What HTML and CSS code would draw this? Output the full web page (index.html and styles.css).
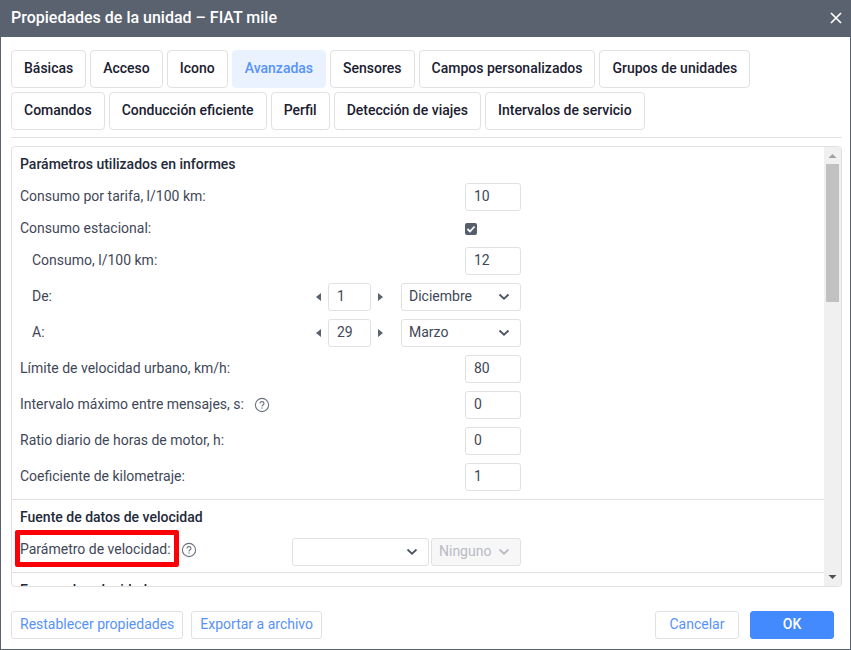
FILE: index.html
```
<!DOCTYPE html>
<html lang="es">
<head>
    <meta charset="utf-8">
    <meta name="viewport" content="width=device-width,initial-scale=1">
    <title>Propiedades de la unidad – FIAT mile</title>
    <link rel="stylesheet" href="styles.css">
</head>
<body>
    <div class="dialog">
        <header class="dialog-header">
            <h1>Propiedades de la unidad – FIAT mile</h1>
            <button type="button" class="close" aria-label="Cerrar">
                <svg width="12" height="12" viewBox="0 0 12 12"><path d="M1 1L11 11M11 1L1 11" stroke="#fff" stroke-width="1.7" fill="none"/></svg>
            </button>
        </header>

        <nav class="tabs">
            <button type="button">Básicas</button>
            <button type="button">Acceso</button>
            <button type="button">Icono</button>
            <button type="button" class="active">Avanzadas</button>
            <button type="button">Sensores</button>
            <button type="button">Campos personalizados</button>
            <button type="button">Grupos de unidades</button>
            <button type="button">Comandos</button>
            <button type="button">Conducción eficiente</button>
            <button type="button">Perfil</button>
            <button type="button">Detección de viajes</button>
            <button type="button">Intervalos de servicio</button>
        </nav>

        <main class="panel">
            <form class="content">
                <section class="group">
                    <h2>Parámetros utilizados en informes</h2>
                    <div class="row">
                        <label for="tarifa">Consumo por tarifa, l/100 km:</label>
                        <input type="text" id="tarifa" class="field" value="10">
                    </div>
                    <div class="row">
                        <label for="estacional">Consumo estacional:</label>
                        <span class="check-cell"><input type="checkbox" id="estacional" class="check" checked></span>
                    </div>
                    <div class="row nested">
                        <label for="consumo">Consumo, l/100 km:</label>
                        <input type="text" id="consumo" class="field" value="12">
                    </div>
                    <div class="row nested">
                        <label for="de_dia">De:</label>
                        <div class="date">
                            <button type="button" class="step prev" aria-label="Día anterior"></button>
                            <input type="text" id="de_dia" class="field day" value="1">
                            <button type="button" class="step next" aria-label="Día siguiente"></button>
                            <span class="select month">
                                <select aria-label="Mes inicial"><option>Diciembre</option></select>
                                <svg width="12" height="8" viewBox="0 0 12 8"><path d="M1.5 1.5L6 5.7L10.5 1.5"/></svg>
                            </span>
                        </div>
                    </div>
                    <div class="row nested">
                        <label for="a_dia">A:</label>
                        <div class="date">
                            <button type="button" class="step prev" aria-label="Día anterior"></button>
                            <input type="text" id="a_dia" class="field day" value="29">
                            <button type="button" class="step next" aria-label="Día siguiente"></button>
                            <span class="select month">
                                <select aria-label="Mes final"><option>Marzo</option></select>
                                <svg width="12" height="8" viewBox="0 0 12 8"><path d="M1.5 1.5L6 5.7L10.5 1.5"/></svg>
                            </span>
                        </div>
                    </div>
                    <div class="row">
                        <label for="limite">Límite de velocidad urbano, km/h:</label>
                        <input type="text" id="limite" class="field" value="80">
                    </div>
                    <div class="row">
                        <label for="intervalo">Intervalo máximo entre mensajes, s:</label>
                        <button type="button" class="help" aria-label="Ayuda">
                            <svg width="16" height="16" viewBox="0 0 16 16"><circle cx="8" cy="8" r="6.6"/><path d="M6 6.6C6 5.3 6.8 4.6 8 4.6S10 5.3 10 6.4C10 7.7 8 7.8 8 9.4M8 10.5V11.8"/></svg>
                        </button>
                        <input type="text" id="intervalo" class="field" value="0">
                    </div>
                    <div class="row">
                        <label for="ratio">Ratio diario de horas de motor, h:</label>
                        <input type="text" id="ratio" class="field" value="0">
                    </div>
                    <div class="row">
                        <label for="coeficiente">Coeficiente de kilometraje:</label>
                        <input type="text" id="coeficiente" class="field" value="1">
                    </div>
                </section>

                <section class="group source">
                    <h2>Fuente de datos de velocidad</h2>
                    <div class="row">
                        <label for="parametro" class="marked">Parámetro de velocidad:</label>
                        <button type="button" class="help" aria-label="Ayuda">
                            <svg width="16" height="16" viewBox="0 0 16 16"><circle cx="8" cy="8" r="6.6"/><path d="M6 6.6C6 5.3 6.8 4.6 8 4.6S10 5.3 10 6.4C10 7.7 8 7.8 8 9.4M8 10.5V11.8"/></svg>
                        </button>
                        <div class="pair">
                            <span class="select param">
                                <select id="parametro"><option></option></select>
                                <svg width="12" height="8" viewBox="0 0 12 8"><path d="M1.5 1.5L6 5.7L10.5 1.5"/></svg>
                            </span>
                            <span class="select unit">
                                <select aria-label="Unidad de medida" disabled><option>Ninguno</option></select>
                                <svg width="12" height="8" viewBox="0 0 12 8"><path d="M1.5 1.5L6 5.7L10.5 1.5"/></svg>
                            </span>
                        </div>
                    </div>
                </section>

                <section class="group">
                    <h2>Exceso de velocidad</h2>
                </section>
            </form>
            <div class="scrollbar">
                <svg width="17" height="17" viewBox="0 0 17 17"><path d="M4.5 11L8.5 7L12.5 11Z" fill="#a0a0a0"/></svg>
                <div class="track"><div class="thumb"></div></div>
                <svg width="17" height="17" viewBox="0 0 17 17"><path d="M4.5 6L8.5 10L12.5 6Z" fill="#505050"/></svg>
            </div>
        </main>

        <footer class="dialog-footer">
            <button type="button" class="btn">Restablecer propiedades</button>
            <button type="button" class="btn">Exportar a archivo</button>
            <button type="button" class="btn cancel">Cancelar</button>
            <button type="button" class="btn ok">OK</button>
        </footer>
    </div>
</body>
</html>
```

FILE: styles.css
```
* {
    box-sizing: border-box;
}

body {
    margin: 0;

    font-family: Roboto, "Liberation Sans", sans-serif;
    font-size: 14px;
    line-height: 20px;
    color: #3f4757;
}

button, input, select {
    margin: 0;
    padding: 0;

    font: inherit;
    color: inherit;
}

button {
    border: none;

    background: none;
    cursor: pointer;
}

svg {
    display: block;
    flex: none;
}

.dialog {
    display: flex;
    flex-direction: column;
    height: 100vh;

    border: 1px solid #5b626f;
    border-top: none;

    background-color: #ffffff;
}

.dialog-header {
    display: flex;
    align-items: center;
    justify-content: space-between;
    flex: none;
    height: 37px;
    padding: 0 8px 2px 10px;

    background-color: #5b626f;
    color: #ffffff;
}

h1 {
    margin: 0;

    font-size: 16px;
    font-weight: 500;
}

/* タブ */
.tabs {
    display: flex;
    flex-wrap: wrap;
    gap: 4px;
    flex: none;
    margin: 0 8px 8px 10px;
    padding: 13px 0 7px;

    border-bottom: 1px solid #e0e1e3;
}

.tabs button {
    height: 38px;
    padding: 0 12px 2px;

    border: 1px solid #e0e1e3;
    border-radius: 4px;

    color: #1b2030;
    font-weight: 500;
}

.tabs .active {
    border-color: #eaf2ff;

    background-color: #eaf2ff;
    color: #5792fb;
}

.panel {
    display: flex;
    flex: 1;
    min-height: 0;
    margin: 0 8px 0 10px;

    border: 1px solid #e0e1e3;
    border-radius: 4px;
    overflow: hidden;
}

.content {
    flex: 1;
    overflow: hidden;
}

.group {
    display: flex;
    flex-direction: column;
    gap: 8px;
    padding: 8px;

    border-bottom: 1px solid #e0e1e3;
}

h2 {
    margin: 0;
    padding-bottom: 2px;

    font-size: 14px;
    line-height: 18px;
    font-weight: 500;
    color: #232939;
}

.row {
    display: flex;
    align-items: center;
    max-width: 501px;
}

.row label {
    margin-right: auto;
    padding-bottom: 2px;

    line-height: 18px;
}

.nested {
    padding-left: 12px;
}

.field {
    width: 56px;
    height: 28px;
    padding: 0 8px 2px;

    border: 1px solid #e0e1e3;
    border-radius: 3px;
}

.check-cell {
    display: flex;
    width: 56px;
}

.check {
    width: 12px;
    height: 12px;

    border-radius: 2px;

    appearance: none;
    background: #565d6b url("data:image/svg+xml,%3Csvg xmlns='http://www.w3.org/2000/svg' viewBox='0 0 12 12'%3E%3Cpath d='M2.5 6L5 8.5L9.5 3.5' fill='none' stroke='white' stroke-width='1.8'/%3E%3C/svg%3E");
}

.date {
    display: flex;
    align-items: center;
}

.day {
    width: 43px;
}

.step {
    width: 5px;
    height: 8px;

    background-color: #5b626f;
}

.prev {
    margin-right: 7px;

    clip-path: polygon(100% 0, 100% 100%, 0 50%);
}

.next {
    margin-left: 7px;

    clip-path: polygon(0 0, 100% 50%, 0 100%);
}

.select {
    display: grid;
    align-items: center;
}

.select select,
.select svg {
    grid-area: 1 / 1;
}

.select select {
    width: 100%;
    height: 28px;
    padding: 0 24px 2px 7px;

    border: 1px solid #e0e1e3;
    border-radius: 3px;

    appearance: none;
    background-color: #ffffff;
}

.select svg {
    justify-self: end;
    margin-right: 11px;

    fill: none;
    stroke: #4d5463;
    stroke-width: 1.8;
    pointer-events: none;
}

.select select:disabled {
    background-color: #f7f7f8;
    color: #b8bbc1;
    opacity: 1;
}

.select select:disabled + svg {
    stroke: #b8bbc1;
}

.month {
    width: 120px;
    margin-left: 18px;
}

.help {
    margin-right: auto;
}

.row label:has(+ .help) {
    margin-right: 10px;
}

.help svg {
    fill: none;
    stroke: #6b7280;
    stroke-width: 1.1;
}

.source {
    padding-bottom: 6px;
}

.source .row {
    height: 28px;
    margin-bottom: 2px;
}

.pair {
    display: flex;
    gap: 2px;
    padding-top: 4px;
}

.param {
    width: 137px;
}

.unit {
    width: 90px;
}

/* 強調表示の赤枠 */
.marked {
    position: relative;
}

.marked::after {
    content: "";
    position: absolute;
    inset: -10px -8px -7px -5px;

    border: 5px solid #fb0007;
    border-radius: 2px;
}

.scrollbar {
    display: flex;
    flex-direction: column;
    width: 17px;

    background-color: #f0f0f0;
}

.track {
    flex: 1;
    padding: 0 2px;
}

.thumb {
    height: 34%;

    background-color: #c1c1c1;
}

.dialog-footer {
    display: flex;
    gap: 8px;
    flex: none;
    padding: 24px 16px 10px 10px;
}

.btn {
    height: 28px;
    padding: 0 8px 2px;

    border: 1px solid #e0e1e3;
    border-radius: 3px;

    color: #5792fb;
}

.cancel,
.ok {
    width: 84px;
}

.cancel {
    margin-left: auto;
}

.ok {
    margin-left: 3px;

    border-color: #448aff;

    background-color: #448aff;
    color: #ffffff;
    font-weight: 500;
}
```
